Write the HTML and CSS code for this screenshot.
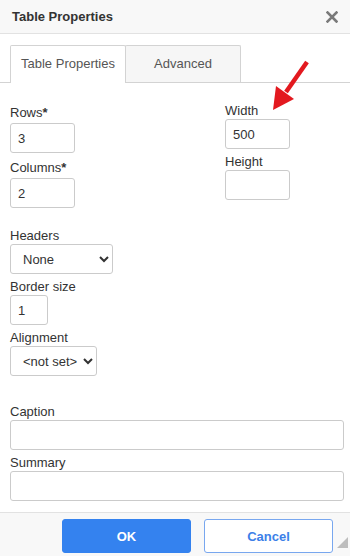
FILE: index.html
```html
<!DOCTYPE html>
<html lang="en">
<head>
    <meta charset="UTF-8">
    <meta name="viewport" content="width=device-width, initial-scale=1.0">
    <title>Table Properties</title>
    <link rel="stylesheet" href="styles.css">
</head>
<body>
    <div class="dialog">
        <div class="header">
            <span class="title">Table Properties</span>
            <svg class="close" width="12" height="12" viewBox="0 0 12 12">
                <path d="M1.5 1.5 L10.5 10.5 M10.5 1.5 L1.5 10.5" stroke="#7a7a7a" stroke-width="2.6" stroke-linecap="square"/>
            </svg>
        </div>

        <div class="tabs">
            <div class="tab active">Table Properties</div>
            <div class="tab">Advanced</div>
        </div>

        <div class="panel">
            <div class="top-grid">
                <div class="col">
                    <div class="field">
                        <label class="req">Rows<b>*</b></label>
                        <input type="text" class="small" value="3">
                    </div>
                    <div class="field">
                        <label class="req">Columns<b>*</b></label>
                        <input type="text" class="small" value="2">
                    </div>
                </div>
                <div class="col">
                    <div class="field">
                        <label>Width</label>
                        <input type="text" class="small" value="500">
                    </div>
                    <div class="field">
                        <label>Height</label>
                        <input type="text" class="small" value="">
                    </div>
                </div>
            </div>

            <div class="lower">
                <div class="field">
                    <label>Headers</label>
                    <select class="headers-select">
                        <option>None</option>
                    </select>
                </div>
                <div class="field">
                    <label>Border size</label>
                    <input type="text" class="tiny" value="1">
                </div>
                <div class="field">
                    <label>Alignment</label>
                    <select class="align-select">
                        <option>&lt;not set&gt;</option>
                    </select>
                </div>
            </div>

            <div class="bottom">
                <div class="field">
                    <label>Caption</label>
                    <input type="text" class="wide" value="">
                </div>
                <div class="field">
                    <label>Summary</label>
                    <input type="text" class="wide" value="">
                </div>
            </div>
        </div>

        <div class="footer">
            <button class="btn ok">OK</button>
            <button class="btn cancel">Cancel</button>
        </div>

        <!-- flecha roja de anotacion -->
        <svg class="arrow" width="350" height="556" viewBox="0 0 350 556">
            <line x1="307" y1="62" x2="286" y2="92" stroke="#e3191f" stroke-width="4.5"/>
            <polygon points="273,110 276,86 294,99" fill="#e3191f"/>
        </svg>
        <!-- esquina para redimensionar -->
        <div class="grip"></div>
    </div>
</body>
</html>
```

FILE: styles.css
```css
body {
    margin: 0;
    font-family: "Liberation Sans", Arial, sans-serif;
    font-size: 13px;
    color: #333;
    background: #fff;
}
.dialog { /* caja del dialogo completo */
    position: relative;
    width: 350px;
    height: 556px;
    overflow: hidden;
    display: flex;
    flex-direction: column;
}
.header {
    height: 33px;
    flex: none;
    display: flex;
    justify-content: space-between;
    align-items: center;
    padding: 0 12px;
    background: #f8f8f8;
    border-bottom: 1px solid #e2e2e2;
}
.title {
    font-weight: bold;
    color: #333;
}
.tabs { /* barra de pestanas */
    flex: none;
    display: flex;
    padding: 11px 0 0 10px;
    border-bottom: 1px solid #d3d3d3;
}
.tab {
    width: 114px;
    height: 36px;
    line-height: 36px;
    text-align: center;
    color: #555;
    background: #f6f6f6;
    border: 1px solid #d3d3d3;
    border-bottom: none;
    border-radius: 2px 2px 0 0;
}
.tab + .tab {
    margin-left: -1px;
}
.tab.active {
    background: #fff;
    height: 37px;
    margin-bottom: -1px;
}
.panel {
    flex: 1;
    padding: 19px 10px 0 10px;
}
.top-grid {
    display: grid;
    grid-template-columns: 215px 1fr;
}
.field {
    display: flex;
    flex-direction: column;
    align-items: flex-start;
}
.field + .field {
    margin-top: 4px;
}
label {
    display: block;
    line-height: 17px;
}
label.req {
    padding-top: 2px;
    margin-bottom: 2px;
}
input, select {
    box-sizing: border-box;
    height: 30px;
    border: 1px solid #cbcbcb;
    border-radius: 3px;
    font-family: inherit;
    font-size: 13px;
    color: #333;
    background: #fff;
    margin: 0;
}
input {
    padding: 0 7px;
}
select {
    padding: 0 3px 0 8px;
}
.small {
    width: 65px;
}
.tiny {
    width: 38px;
}
.wide {
    width: 334px;
}
.headers-select {
    width: 103px;
}
.align-select {
    width: 87px;
}
.lower {
    margin-top: 19px;
}
.bottom {
    margin-top: 27px;
}
.footer { /* barra inferior con los botones */
    flex: none;
    box-sizing: border-box;
    height: 44px;
    display: flex;
    justify-content: flex-end;
    align-items: flex-start;
    gap: 13px;
    padding: 6px 17px 0 0;
    background: #f8f8f8;
    border-top: 1px solid #e2e2e2;
}
.btn {
    width: 129px;
    height: 34px;
    border-radius: 3px;
    font-family: inherit;
    font-size: 13px;
    font-weight: bold;
    cursor: pointer;
}
.ok {
    background: #3482ef;
    border: 1px solid #3482ef;
    color: #fff;
}
.cancel {
    background: #fff;
    border: 1px solid #78a7ef;
    color: #3c7fe8;
}
.arrow {
    position: absolute;
    top: 0;
    left: 0;
    pointer-events: none;
}
.grip {
    position: absolute;
    right: 2px;
    bottom: 8px;
    width: 0;
    height: 0;
    border-left: 11px solid transparent;
    border-bottom: 11px solid #bdbdbd;
}
```
